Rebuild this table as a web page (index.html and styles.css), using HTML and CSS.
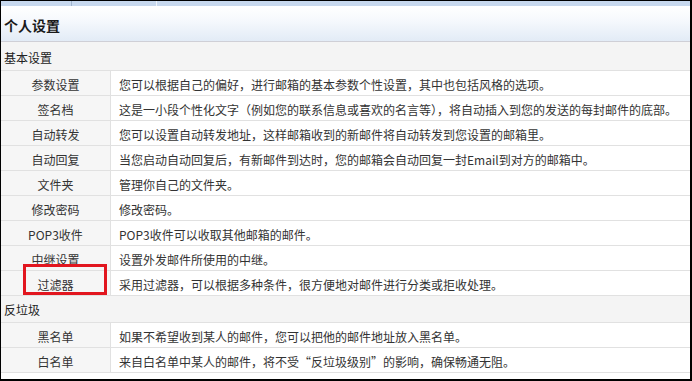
FILE: index.html
```html
<!DOCTYPE html>
<html lang="zh-CN">
<head>
<meta charset="utf-8">
<title>个人设置</title>
<link rel="stylesheet" href="styles.css">
</head>
<body>
<div class="frame">
  <div class="tabs"><span class="tab t1"></span><span class="tab t2"></span></div>
  <div class="title">个人设置</div>
  <div class="section sec1">基本设置</div>
  <div class="row"><div class="label">参数设置</div><div class="desc">您可以根据自己的偏好，进行邮箱的基本参数个性设置，其中也包括风格的选项。</div></div>
  <div class="row"><div class="label">签名档</div><div class="desc">这是一小段个性化文字（例如您的联系信息或喜欢的名言等），将自动插入到您的发送的每封邮件的底部。</div></div>
  <div class="row"><div class="label">自动转发</div><div class="desc">您可以设置自动转发地址，这样邮箱收到的新邮件将自动转发到您设置的邮箱里。</div></div>
  <div class="row"><div class="label">自动回复</div><div class="desc">当您启动自动回复后，有新邮件到达时，您的邮箱会自动回复一封Email到对方的邮箱中。</div></div>
  <div class="row"><div class="label">文件夹</div><div class="desc">管理你自己的文件夹。</div></div>
  <div class="row"><div class="label">修改密码</div><div class="desc">修改密码。</div></div>
  <div class="row"><div class="label">POP3收件</div><div class="desc">POP3收件可以收取其他邮箱的邮件。</div></div>
  <div class="row"><div class="label">中继设置</div><div class="desc">设置外发邮件所使用的中继。</div></div>
  <div class="row"><div class="label">过滤器</div><div class="desc">采用过滤器，可以根据多种条件，很方便地对邮件进行分类或拒收处理。</div></div>
  <div class="section sec2">反垃圾</div>
  <div class="row"><div class="label">黑名单</div><div class="desc">如果不希望收到某人的邮件，您可以把他的邮件地址放入黑名单。</div></div>
  <div class="row"><div class="label">白名单</div><div class="desc">来自白名单中某人的邮件，将不受“反垃圾级别”的影响，确保畅通无阻。</div></div>
  <div class="highlight"></div>
</div>
</body>
</html>
```
FILE: styles.css
```css
html, body {
  margin: 0;
  padding: 0;
  background: #ffffff;
}
body {
  font-family: "Noto Sans CJK SC", "Microsoft YaHei", sans-serif;
  font-size: 12px;
  color: #333333;
}
.frame {
  position: relative;
  box-sizing: border-box;
  width: 692px;
  height: 381px;
  border-style: solid;
  border-color: #000000;
  border-width: 1px 2px 2px 1px;
  overflow: hidden;
  background: #ffffff;
}
.tabs {
  height: 5px;
  background: #c7d8ee;
  display: flex;
}
.tab {
  height: 5px;
  border-right: 1px solid #eef3fa;
}
.t1 { width: 70px; border-right: 1px solid #9fb3cc; }
.t2 { width: 84px; }
.title {
  height: 36px;
  box-sizing: border-box;
  padding-left: 3px;
  padding-top: 2px;
  display: flex;
  align-items: center;
  font-size: 14px;
  font-weight: bold;
  color: #1a1a1a;
  background: linear-gradient(to bottom, #ffffff 0%, #f6f9fd 40%, #e2ebf6 100%);
  border-bottom: 1px solid #cfcfd6;
}
.section {
  box-sizing: border-box;
  display: flex;
  align-items: center;
  padding-left: 3px;
  background: #f4f4f4;
  border-bottom: 1px solid #e1e1e1;
  color: #222222;
}
.sec1 { height: 29px; padding-top: 2px; }
.sec2 { height: 27px; padding-top: 1px; }
.row {
  display: grid;
  grid-template-columns: 110px 1fr;
  height: 25px;
  box-sizing: border-box;
  border-bottom: 1px solid #e1e1e1;
}
.label {
  background: #f6f6f6;
  border-right: 1px solid #e1e1e1;
  display: flex;
  align-items: center;
  justify-content: center;
  padding-top: 3px;
  color: #333333;
}
.desc {
  display: flex;
  align-items: center;
  padding-left: 8px;
  padding-top: 3px;
  white-space: nowrap;
  color: #333333;
}
.highlight {
  position: absolute;
  left: 22px;
  top: 263px;
  width: 78px;
  height: 25px;
  border: 3px solid #e2161f;
}
```
